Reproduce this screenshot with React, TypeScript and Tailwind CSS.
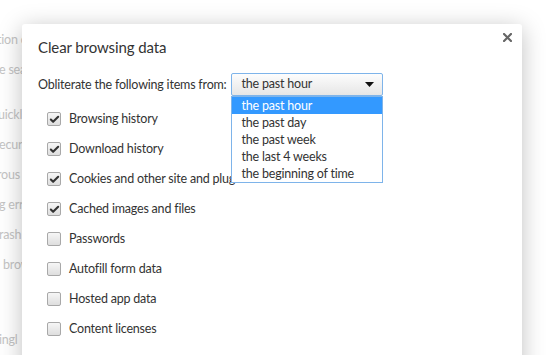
import { Check } from 'lucide-react';

const pageLines = [
  { text: 'tion c', mt: 'mt-[25px]', ml: '-ml-[3px]' },
  { text: 'e sea', mt: 'mt-0', ml: '-ml-[1px]' },
  { text: 'uickl', mt: 'mt-[15px]', ml: '-ml-[2px]' },
  { text: 'ecur', mt: 'mt-0', ml: '-ml-[1px]' },
  { text: 'rous', mt: 'mt-0', ml: '-ml-[3px]' },
  { text: 'g err', mt: 'mt-0', ml: '-ml-[1px]' },
  { text: 'rash', mt: 'mt-0', ml: '-ml-[1px]' },
  { text: 'brow', mt: 'mt-0', ml: 'ml-[3px]' },
  { text: 'ingl', mt: 'mt-[45px]', ml: '-ml-[1px]' },
];

const items = [
  { label: 'Browsing history', checked: true },
  { label: 'Download history', checked: true },
  { label: 'Cookies and other site and plugin data', checked: true },
  { label: 'Cached images and files', checked: true },
  { label: 'Passwords', checked: false },
  { label: 'Autofill form data', checked: false },
  { label: 'Hosted app data', checked: false },
  { label: 'Content licenses', checked: false },
];

const options = [
  'the past hour',
  'the past day',
  'the past week',
  'the last 4 weeks',
  'the beginning of time',
];

function Checkbox({ checked }: { checked: boolean }) {
  return (
    <span className="flex h-[14px] w-[14px] shrink-0 items-center justify-center rounded-[2px] border border-[#a8a8a8] bg-gradient-to-b from-[#f6f6f6] to-[#dedede]">
      {checked && <Check className="h-[11px] w-[11px] text-[#333]" strokeWidth={4.5} />}
    </span>
  );
}

export default function App() {
  return (
    <div className="relative h-[355px] w-[546px] overflow-hidden bg-white font-['Lato','Liberation_Sans',sans-serif] text-[12.5px] tracking-[-0.2px]">
      <div className="flex flex-col text-[#c4c4c4]">
        {pageLines.map((l, i) => (
          <div key={i} className={`${l.mt} ${l.ml} h-[30px] whitespace-nowrap leading-[30px]`}>
            {l.text}
          </div>
        ))}
      </div>

      <div className="absolute left-[22px] top-[24px] h-[360px] w-[500px] rounded-[3px] bg-white px-4 pt-[13px] text-[#333] shadow-[0_4px_23px_rgba(0,0,0,0.25)]">
        <button className="absolute right-[10px] top-[9px]">
          <svg width="9" height="9" viewBox="0 0 9 9">
            <path d="M1 1l7 7M8 1l-7 7" stroke="#666" strokeWidth="2.2" strokeLinecap="square" />
          </svg>
        </button>
        <h1 className="text-[15px] leading-[20px] tracking-[-0.1px] text-[#333]">Clear browsing data</h1>

        <div className="mt-[16px] flex items-center">
          <span className="leading-[22px]">Obliterate the following items from:</span>
          <div className="relative ml-[4px]">
            <div className="flex h-[23px] w-[152px] items-center justify-between rounded-[2px] border border-[#7eb4ea] bg-gradient-to-b from-[#fdfdfd] to-[#e6e6e6] pl-[10px] pr-[8px]">
              <span>the past hour</span>
              <svg width="9" height="5" viewBox="0 0 9 5">
                <path d="M0 0h9L4.5 5z" fill="#111" />
              </svg>
            </div>
            <ul className="absolute left-0 top-[23px] z-10 w-[152px] border border-[#7eb4ea] bg-white">
              {options.map((o, i) => (
                <li
                  key={o}
                  className={`h-[17px] pl-[10px] leading-[17px] ${i === 0 ? 'bg-[#3399ff] text-white' : 'text-[#333]'}`}
                >
                  {o}
                </li>
              ))}
            </ul>
          </div>
        </div>

        <div className="mt-[8px] flex flex-col">
          {items.map(item => (
            <label key={item.label} className="flex h-[30px] items-center gap-[8px] whitespace-nowrap pl-[9px]">
              <Checkbox checked={item.checked} />
              <span>{item.label}</span>
            </label>
          ))}
        </div>
      </div>
    </div>
  );
}
